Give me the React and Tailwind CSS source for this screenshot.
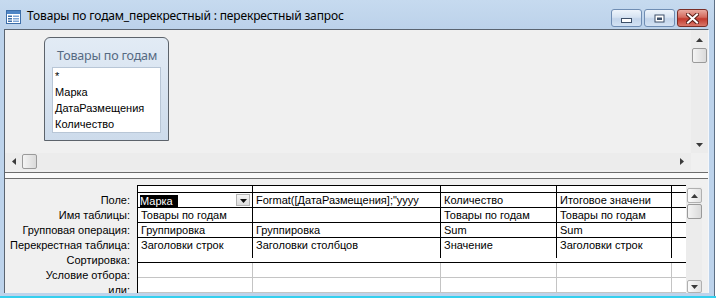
import React from "react";

const GRID_FONT = "font-['Liberation_Sans',Arial,sans-serif] text-[11px] whitespace-nowrap";

function TitleIcon() {
  return (
    <svg width="15" height="14" viewBox="0 0 15 14" className="shrink-0">
      <rect x="0.5" y="0.5" width="14" height="13" fill="#ffffff" stroke="#3d6ea8" />
      <rect x="1" y="1" width="13" height="3" fill="#4f86c6" />
      <rect x="2" y="5.5" width="4" height="1.5" fill="#3d6ea8" />
      <rect x="7" y="5.5" width="6" height="1.5" fill="#7fa6d6" />
      <rect x="2" y="8" width="4" height="1.5" fill="#3d6ea8" />
      <rect x="7" y="8" width="6" height="1.5" fill="#7fa6d6" />
      <rect x="2" y="10.5" width="4" height="1.5" fill="#3d6ea8" />
      <rect x="7" y="10.5" width="6" height="1.5" fill="#7fa6d6" />
    </svg>
  );
}

function CaptionButton({ kind }) {
  const red = kind === "close";
  return (
    <div
      className={
        "w-[31px] h-[18px] rounded-[3px] border flex items-center justify-center " +
        (red
          ? "border-[#7a2e27] bg-[linear-gradient(#e9a99f,#d46a5e_45%,#c2392d_55%,#d9786a)]"
          : "border-[#6f8db3] bg-[linear-gradient(#eef4fb,#d6e3f2_45%,#c2d4ea_55%,#d3e2f3)]")
      }
    >
      {kind === "min" && (
        <svg width="11" height="5" viewBox="0 0 11 5" className="mt-[4px]">
          <rect x="0.5" y="0.5" width="10" height="4" fill="#fff" stroke="#3c4f68" />
        </svg>
      )}
      {kind === "max" && (
        <svg width="11" height="9" viewBox="0 0 11 9">
          <rect x="0.5" y="0.5" width="10" height="8" fill="#3c4f68" />
          <rect x="1.5" y="1.5" width="8" height="6" fill="#fff" />
          <rect x="3" y="3.5" width="5" height="2.5" fill="#3c4f68" />
        </svg>
      )}
      {kind === "close" && (
        <svg width="13" height="11" viewBox="0 0 13 11">
          <path d="M2 1.5 L11 9.5 M11 1.5 L2 9.5" stroke="#5a1e18" strokeWidth="4" strokeLinecap="square" />
          <path d="M2 1.5 L11 9.5 M11 1.5 L2 9.5" stroke="#ffffff" strokeWidth="2" strokeLinecap="square" />
        </svg>
      )}
    </div>
  );
}

function Arrow({ dir }) {
  const paths = {
    up: "M0 4 L3.5 0 L7 4 Z",
    down: "M0 0 L7 0 L3.5 4 Z",
    left: "M4 0 L4 7 L0 3.5 Z",
    right: "M0 0 L0 7 L4 3.5 Z",
  };
  const vert = dir === "up" || dir === "down";
  return (
    <svg width={vert ? 7 : 4} height={vert ? 4 : 7} viewBox={vert ? "0 0 7 4" : "0 0 4 7"}>
      <path d={paths[dir]} fill="#3a3a3a" />
    </svg>
  );
}

function Thumb({ className }) {
  return (
    <div
      className={
        "rounded-[2px] border border-[#9a9a9a] bg-[linear-gradient(90deg,#f4f4f4,#dadada)] " + className
      }
    />
  );
}

function TableBox() {
  const items = ["*", "Марка", "ДатаРазмещения", "Количество"];
  return (
    <div className="w-[125px] h-[104px] rounded-t-[6px] border border-[#5c636b] bg-[linear-gradient(#e2ebf5,#cddbeb)] flex flex-col px-[7px]">
      <div className="h-[29px] flex items-center pl-[5px] pt-[8px] text-[12.5px] text-[#566a82] font-['Noto_Sans',sans-serif] tracking-[-0.2px]">
        Товары по годам
      </div>
      <div className="h-[66px] border border-[#b8c6d6] bg-white pl-[2px] flex flex-col">
        {items.map((t) => (
          <div key={t} className={"h-[16px] leading-[16px] text-black " + GRID_FONT}>
            {t}
          </div>
        ))}
      </div>
    </div>
  );
}

const COLS = [115, 188, 116, 115];

const ROWS = [
  ["Марка", "Format([ДатаРазмещения];\"yyyy", "Количество", "Итоговое значени"],
  ["Товары по годам", "", "Товары по годам", "Товары по годам"],
  ["Группировка", "Группировка", "Sum", "Sum"],
  ["Заголовки строк", "Заголовки столбцов", "Значение", "Заголовки строк"],
];

const LABELS = [
  "Поле:",
  "Имя таблицы:",
  "Групповая операция:",
  "Перекрестная таблица:",
  "Сортировка:",
  "Условие отбора:",
  "или:",
];

function DataRow({ cells, first, last }) {
  return (
    <div className="flex h-[15px]">
      {cells.map((c, i) => (
        <div
          key={i}
          style={{ width: COLS[i] }}
          className={
            "h-[15px] border-r border-black bg-white overflow-hidden relative " +
            (last ? "" : "border-b ") +
            GRID_FONT
          }
        >
          {first && i === 0 ? (
            <>
              <span className="inline-block ml-[2px] mt-[1px] bg-black text-white leading-[12px] pr-[5px]">Марка</span>
              <div className="absolute right-[2px] top-[1px] w-[14px] h-[12px] border border-[#b5b5b5] bg-[linear-gradient(#f6f6f6,#dcdcdc)] flex items-center justify-center">
                <svg width="7" height="5" viewBox="0 0 7 5" className="mt-[2px]">
                  <path d="M0 0 L7 0 L3.5 4 Z" fill="#111" />
                </svg>
              </div>
            </>
          ) : (
            <span className="pl-[3px] leading-[14px] block">{c}</span>
          )}
        </div>
      ))}
      <div className={"w-[14px] h-[15px] border-black bg-white " + (last ? "" : "border-b")} />
    </div>
  );
}

export default function App() {
  return (
    <div className="w-[719px] h-[300px] bg-white overflow-hidden">
      <div className="w-[715px] h-[296px] bg-[#bdd3eb] border-r border-[#5d6f84] flex flex-col">
        {/* title bar */}
        <div className="h-[29px] shrink-0 flex items-start bg-[linear-gradient(#c6daef,#bcd2ea)]">
          <div className="ml-[6px] mt-[10px]">
            <TitleIcon />
          </div>
          <div className="ml-[6px] mt-[8px] text-[12px] leading-[16px] text-black font-['Noto_Sans',sans-serif] tracking-[-0.15px]">
            Товары по годам_перекрестный : перекрестный запрос
          </div>
          <div className="ml-auto mr-[6px] mt-[9px] flex gap-[2px]">
            <CaptionButton kind="min" />
            <CaptionButton kind="max" />
            <CaptionButton kind="close" />
          </div>
        </div>

        {/* client area */}
        <div className="ml-[4px] w-[705px] h-[264px] shrink-0 border-t border-l border-[#5a6470] border-r border-r-[#f4f7fb] bg-[#f0f0f0] flex flex-col overflow-hidden">
          {/* top pane */}
          <div className="h-[140px] shrink-0 flex flex-col">
            <div className="h-[123px] flex">
              <div className="flex-1 pl-[39px] pt-[7px]">
                <TableBox />
              </div>
              <div className="w-[17px] bg-[#ececec] flex flex-col items-center">
                <div className="h-[17px] flex items-center justify-center mt-[1px]">
                  <Arrow dir="up" />
                </div>
                <Thumb className="w-[15px] h-[15px]" />
                <div className="flex-1" />
                <div className="h-[17px] flex items-center justify-center">
                  <Arrow dir="down" />
                </div>
              </div>
            </div>
            <div className="h-[17px] flex">
              <div className="flex-1 bg-[#ececec] flex items-center">
                <div className="w-[17px] flex items-center justify-center">
                  <Arrow dir="left" />
                </div>
                <Thumb className="w-[15px] h-[15px]" />
                <div className="flex-1" />
                <div className="w-[17px] flex items-center justify-center mr-[1px]">
                  <Arrow dir="right" />
                </div>
              </div>
              <div className="w-[17px] bg-[#f0f0f0]" />
            </div>
          </div>

          {/* splitter */}
          <div className="h-[15px] shrink-0 flex flex-col">
            <div className="h-[2px]" />
            <div className="h-[1px] bg-[#6e6e6e]" />
            <div className="h-[5px] bg-[#fbfbfb]" />
            <div className="h-[1px] bg-[#6e6e6e]" />
            <div className="flex-1" />
          </div>

          {/* design grid */}
          <div className="flex-1 flex min-h-0">
            {/* labels */}
            <div className="w-[132px] shrink-0 flex flex-col pt-[8px]">
              {LABELS.map((l) => (
                <div key={l} className={"h-[15px] shrink-0 text-right pr-[7px] leading-[14px] " + GRID_FONT}>
                  {l}
                </div>
              ))}
            </div>
            {/* grid */}
            <div className="w-[549px] shrink-0 flex flex-col border-l border-black bg-white">
              <div className="flex h-[8px] border-t border-black">
                {COLS.map((w, i) => (
                  <div key={i} style={{ width: w }} className="h-[7px] border-r border-b border-black" />
                ))}
                <div className="w-[14px] h-[7px] border-b border-black" />
              </div>
              {ROWS.map((c, i) => (
                <DataRow key={i} cells={c} first={i === 0} last={i === 3} />
              ))}
              <div className="flex h-[5px]">
                {COLS.map((w, i) => (
                  <div key={i} style={{ width: w }} className="h-[5px] border-r border-black" />
                ))}
              </div>
              <div className="h-[10px] border-b border-black" />
              {[0, 1].map((r) => (
                <div key={r} className="flex h-[15px] shrink-0">
                  {COLS.map((w, i) => (
                    <div key={i} style={{ width: w }} className="h-[15px] border-r border-b border-[#c4c4c4]" />
                  ))}
                  <div className="w-[14px] h-[15px] border-b border-[#c4c4c4]" />
                </div>
              ))}
            </div>
            <div className="w-[16px] shrink-0 bg-[#ececec] mt-[2px] flex flex-col items-center">
              <div className="w-[15px] h-[15px] mt-[1px] border border-[#b0b0b0] rounded-[2px] bg-[linear-gradient(90deg,#fafafa,#e2e2e2)] flex items-center justify-center">
                <Arrow dir="up" />
              </div>
              <Thumb className="w-[15px] h-[15px] mt-[1px]" />
              <div className="flex-1" />
              <div className="w-[15px] h-[13px] border border-[#b0b0b0] rounded-[2px] bg-[linear-gradient(90deg,#fafafa,#e2e2e2)] flex items-center justify-center">
                <Arrow dir="down" />
              </div>
            </div>
            <div className="flex-1" />
          </div>
        </div>
      </div>
      <div className="w-[716px] h-[2px] bg-[#35cfee]" />
    </div>
  );
}
